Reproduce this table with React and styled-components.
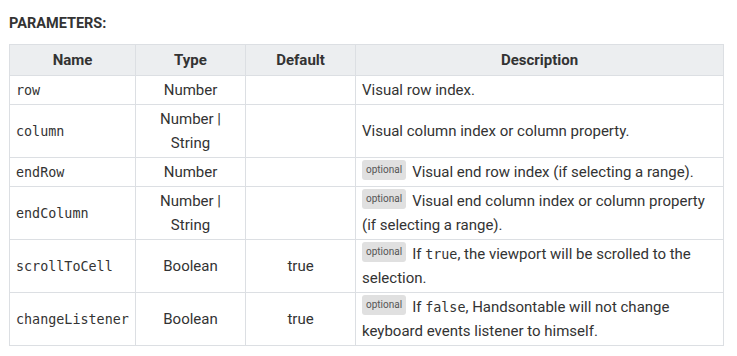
import React from "react";
import styled, { createGlobalStyle } from "styled-components";

const GlobalStyle = createGlobalStyle`
  html, body {
    margin: 0;
    padding: 0;
    background: #ffffff;
  }
  body {
    font-family: Roboto, "Liberation Sans", sans-serif;
    color: #333333;
  }
`;

const params = [
  { name: "row", type: ["Number"], def: "", desc: ["Visual row index."] },
  {
    name: "column",
    type: ["Number |", "String"],
    def: "",
    desc: ["Visual column index or column property."],
  },
  {
    name: "endRow",
    type: ["Number"],
    def: "",
    optional: true,
    desc: ["Visual end row index (if selecting a range)."],
  },
  {
    name: "endColumn",
    type: ["Number |", "String"],
    def: "",
    optional: true,
    desc: ["Visual end column index or column property (if selecting a range)."],
  },
  {
    name: "scrollToCell",
    type: ["Boolean"],
    def: "true",
    optional: true,
    desc: ["If ", { code: "true" }, ", the viewport will be scrolled to the selection."],
  },
  {
    name: "changeListener",
    type: ["Boolean"],
    def: "true",
    optional: true,
    desc: [
      "If ",
      { code: "false" },
      ", Handsontable will not change keyboard events listener to himself.",
    ],
  },
];

function App() {
  return (
    <Page>
      <GlobalStyle />
      <Title>PARAMETERS:</Title>
      <Table>
        <colgroup>
          <col style={{ width: 126 }} />
          <col style={{ width: 110 }} />
          <col style={{ width: 110 }} />
          <col />
        </colgroup>
        <thead>
          <tr>
            <HeadCell>Name</HeadCell>
            <HeadCell>Type</HeadCell>
            <HeadCell>Default</HeadCell>
            <HeadCell>Description</HeadCell>
          </tr>
        </thead>
        <tbody>
          {params.map((p) => (
            <tr key={p.name}>
              <Cell>
                <Code>{p.name}</Code>
              </Cell>
              <Cell center>
                {p.type.map((t, i) => (
                  <React.Fragment key={t}>
                    {i > 0 && <br />}
                    {t}
                  </React.Fragment>
                ))}
              </Cell>
              <Cell center>{p.def}</Cell>
              <Cell>
                {p.optional && <Badge>optional</Badge>}
                {p.desc.map((part, i) =>
                  typeof part === "string" ? (
                    <React.Fragment key={i}>{part}</React.Fragment>
                  ) : (
                    <Code key={i}>{part.code}</Code>
                  )
                )}
              </Cell>
            </tr>
          ))}
        </tbody>
      </Table>
    </Page>
  );
}

export default App;

const Page = styled.div`
  padding: 14px 13px 0 9px;
  width: 715px;
`;

const Title = styled.div`
  font-size: 14.5px;
  font-weight: 700;
  color: #333333;
  line-height: 20px;
  margin-bottom: 10px;
`;

const Table = styled.table`
  border-collapse: collapse;
  width: 715px;
  table-layout: fixed;
  font-size: 15px;
  line-height: 24px;
  color: #333333;
`;

const HeadCell = styled.th`
  background: #eceef0;
  border: 1px solid #dcdfe3;
  font-weight: 700;
  padding: 3px 6px;
  text-align: center;
`;

const Cell = styled.td`
  border: 1px solid #dcdfe3;
  padding: 2px 6px;
  text-align: ${(p) => (p.center ? "center" : "left")};
  vertical-align: middle;
`;

const Code = styled.code`
  font-family: "DejaVu Sans Mono", "Liberation Mono", monospace;
  font-size: 13.4px;
  line-height: 1;
  color: #333333;
`;

const Badge = styled.span`
  display: inline-block;
  font-size: 10px;
  line-height: 16px;
  height: 20px;
  box-sizing: border-box;
  padding: 2px 4px;
  margin-right: 6px;
  border-radius: 3px;
  background: #e0e0e0;
  color: #555555;
  vertical-align: top;
`;
